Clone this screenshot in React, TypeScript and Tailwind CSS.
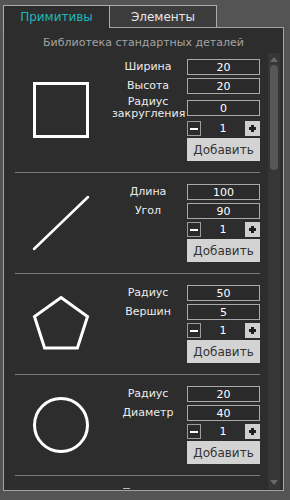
import type { ReactNode } from 'react'

const font = { fontFamily: '"DejaVu Sans", Verdana, sans-serif' }

function Field({ label, value, tall }: { label: ReactNode; value: string; tall?: boolean }) {
  return (
    <div className={`flex items-center gap-[3px] ${tall ? 'h-[22px]' : 'h-[16px]'}`}>
      <div className="w-[72px] text-center text-[11px] leading-[12px] text-[#ececec]">{label}</div>
      <div className="flex h-[16px] w-[73px] items-center justify-center border border-[#a9a9a9] bg-[#2b2b2b] text-[11px] leading-none text-white">
        {value}
      </div>
    </div>
  )
}

function Stepper() {
  return (
    <div className="flex h-[15px] items-center gap-[3px]">
      <div className="w-[72px]" />
      <div className="flex w-[73px] items-center">
        <div className="flex h-[15px] w-[14px] items-center justify-center border border-[#9c9c9c] bg-[#2b2b2b]">
          <div className="h-[2px] w-[8px] bg-white" />
        </div>
        <div className="flex-1 text-center text-[11px] leading-none text-white">1</div>
        <div className="relative flex h-[15px] w-[15px] items-center justify-center bg-[#cfcfcf]">
          <div className="absolute h-[3px] w-[7px] bg-[#1e1e1e]" />
          <div className="absolute h-[7px] w-[3px] bg-[#1e1e1e]" />
        </div>
      </div>
    </div>
  )
}

function AddButton() {
  return (
    <div className="flex gap-[3px]">
      <div className="w-[72px]" />
      <button className="h-[23px] w-[73px] bg-[#d3d3d3] text-[12px] text-[#333]" style={font}>
        Добавить
      </button>
    </div>
  )
}

function Section({ icon, children, first }: { icon: ReactNode; children: ReactNode; first?: boolean }) {
  return (
    <div className={`flex w-[245px] items-center border-b border-[#7c7c7c] pb-[11px] ${first ? 'pt-[6px]' : 'pt-[11px]'}`}>
      <div className="w-[97px] pl-[17px]">{icon}</div>
      <div className="flex flex-col">{children}</div>
    </div>
  )
}

const Shape = ({ children }: { children: ReactNode }) => (
  <svg width="58" height="58" viewBox="0 0 58 58" fill="none" stroke="white" strokeWidth="3">
    {children}
  </svg>
)

export default function App() {
  return (
    <div className="h-[500px] w-[290px] overflow-hidden bg-[#545454] pl-[3px] pt-[5px]" style={font}>
      <div className="flex h-[22px] items-end">
        <div className="relative z-10 -mb-px flex h-[23px] w-[107px] items-center justify-center border border-b-0 border-[#ababab] bg-[#2d2d2d] text-[12px] text-[#1fb6b8]">
          Примитивы
        </div>
        <div className="flex h-[22px] w-[107px] items-center justify-center border border-b-0 border-l-0 border-[#ababab] bg-[#3c3c3c] text-[12px] text-[#e8e8e8]">
          Элементы
        </div>
      </div>
      <div className="flex h-[464px] w-[281px] flex-col border border-[#a3a3a3] bg-[#2d2d2d]">
        <div className="h-[25px] pt-[9px] text-center text-[11px] leading-[12px] text-[#a3a3a3]">
          Библиотека стандартных деталей
        </div>
        <div className="flex min-h-0 flex-1 pb-[1px] pr-[3px]">
          <div className="flex-1 overflow-hidden pl-[11px]">
            <Section
              first
              icon={
                <Shape>
                  <rect x="2.5" y="2.5" width="53" height="53" />
                </Shape>
              }
            >
              <div className="flex flex-col gap-[3px]">
                <Field label="Ширина" value="20" />
                <Field label="Высота" value="20" />
                <Field
                  tall
                  value="0"
                  label={
                    <>
                      Радиус
                      <br />
                      закругления
                    </>
                  }
                />
              </div>
              <div className="mt-[2px] flex flex-col gap-[2px]">
                <Stepper />
                <AddButton />
              </div>
            </Section>
            <Section
              icon={
                <Shape>
                  <line x1="2" y1="55" x2="56" y2="3" strokeWidth="2.5" strokeLinecap="round" />
                </Shape>
              }
            >
              <div className="flex flex-col gap-[3px]">
                <Field label="Длина" value="100" />
                <Field label="Угол" value="90" />
                <Stepper />
              </div>
              <div className="mt-[2px]">
                <AddButton />
              </div>
            </Section>
            <Section
              icon={
                <Shape>
                  <polygon points="29,2.5 55.5,21.6 45.4,53 12.6,53 2.5,21.6" strokeLinejoin="miter" />
                </Shape>
              }
            >
              <div className="flex flex-col gap-[3px]">
                <Field label="Радиус" value="50" />
                <Field label="Вершин" value="5" />
                <Stepper />
              </div>
              <div className="mt-[2px]">
                <AddButton />
              </div>
            </Section>
            <Section
              icon={
                <Shape>
                  <circle cx="29" cy="29" r="26.5" />
                </Shape>
              }
            >
              <div className="flex flex-col gap-[3px]">
                <Field label="Радиус" value="20" />
                <Field label="Диаметр" value="40" />
                <Stepper />
              </div>
              <div className="mt-[2px]">
                <AddButton />
              </div>
            </Section>
            <div className="pt-[12px] pl-[108px]">
              <div className="h-[2px] w-[7px] bg-[#b8b8b8]" />
            </div>
          </div>
          <div className="flex w-[12px] flex-col items-center bg-[#363636] pt-[4px] pb-[4px]">
            <div className="h-0 w-0 border-x-[4px] border-b-[5px] border-x-transparent border-b-[#6a6a6a]" />
            <div className="mt-[3px] h-[105px] w-[8px] rounded-[4px] bg-[#575757]" />
            <div className="flex-1" />
            <div className="h-0 w-0 border-x-[4px] border-t-[5px] border-x-transparent border-t-[#6a6a6a]" />
          </div>
        </div>
      </div>
    </div>
  )
}
